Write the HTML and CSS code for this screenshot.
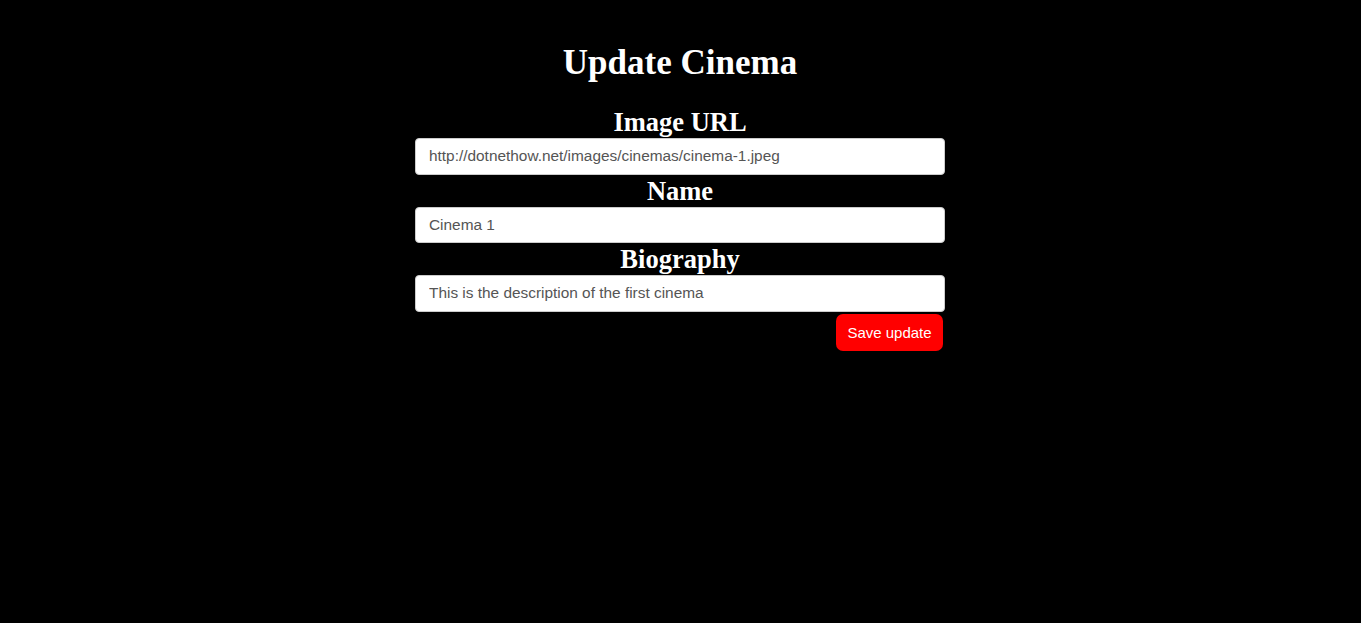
FILE: index.html
```html
<!DOCTYPE html>
<html>
<head>
<meta charset="utf-8">
<link rel="stylesheet" href="styles.css">
</head>
<body>
<main class="page">
  <h1 class="title">Update Cinema</h1>
  <form class="form">
    <label class="label" for="img">Image URL</label>
    <input class="field" id="img" type="text" value="http://dotnethow.net/images/cinemas/cinema-1.jpeg">
    <label class="label" for="name">Name</label>
    <input class="field" id="name" type="text" value="Cinema 1">
    <label class="label" for="bio">Biography</label>
    <input class="field" id="bio" type="text" value="This is the description of the first cinema">
    <div class="actions">
      <button class="save" type="button">Save update</button>
    </div>
  </form>
</main>
</body>
</html>
```
FILE: styles.css
```css
html, body {
  margin: 0;
  padding: 0;
  background: #000;
  height: 100%;
}
.page {
  display: flex;
  flex-direction: column;
  align-items: center;
  padding-right: 1px;
  font-family: "Liberation Serif", "Times New Roman", serif;
  color: #fff;
}
.title {
  font-size: 35px;
  font-weight: bold;
  line-height: 37px;
  margin: 44px 0 25px;
}
.form {
  width: 530px;
  display: flex;
  flex-direction: column;
}
.label {
  display: block;
  text-align: center;
  font-size: 26.5px;
  font-weight: bold;
  line-height: 32px;
  height: 32px;
}
.field {
  box-sizing: border-box;
  height: 36.5px;
  width: 100%;
  margin: 0;
  border: 1px solid #ccc;
  border-radius: 4px;
  background: #fff;
  padding: 0 13px;
  font-family: "Liberation Sans", Arial, sans-serif;
  font-size: 15.4px;
  color: #555;
  outline: none;
}
.actions {
  display: flex;
  justify-content: flex-end;
  padding-top: 2.5px;
  padding-right: 2px;
}
.save {
  box-sizing: border-box;
  height: 37px;
  width: 107px;
  padding: 0;
  border: none;
  border-radius: 7px;
  background: #ff0000;
  color: #fff;
  font-family: "Liberation Sans", Arial, sans-serif;
  font-size: 15px;
}
```
